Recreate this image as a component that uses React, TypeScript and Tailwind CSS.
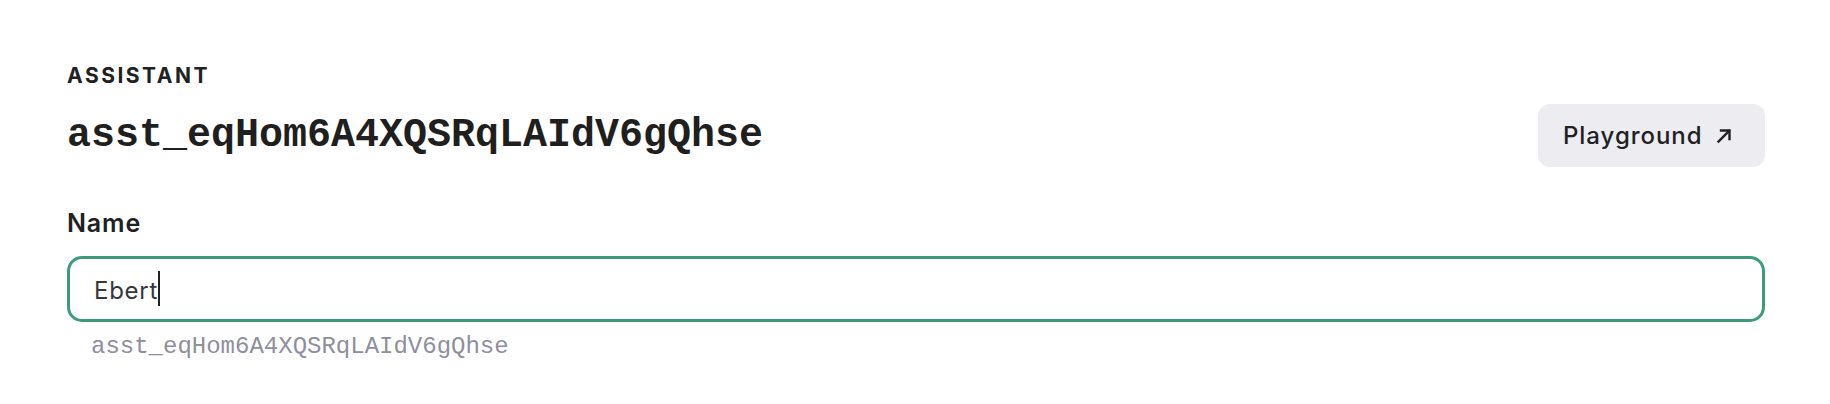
import React from "react";

export default function App() {
  return (
    <div className="w-[1830px] h-[404px] bg-white px-[67px] pt-[64px] text-[#202123] font-['Inter',sans-serif]">
      <div className="w-[1698px]">
        <div className="text-[21px] leading-[24px] font-bold tracking-[0.12em]">ASSISTANT</div>
        <div className="mt-[16px] flex items-center justify-between">
          <div className="font-['Liberation_Mono',monospace] font-bold text-[40px] leading-[48px] text-[#1f1f1f]">
            asst_eqHom6A4XQSRqLAIdV6gQhse
          </div>
          <button className="flex items-center h-[63px] w-[227px] rounded-[12px] bg-[#ececf1] pl-[25px] text-[24px] tracking-[0.04em] font-medium leading-[28px] text-[#202123]">
            <span>Playground</span>
            <svg className="ml-[12px]" width="18" height="18" viewBox="0 0 18 18" fill="none" stroke="#202123" strokeWidth="2.4" strokeLinecap="square">
              <path d="M3.5 14.5 L14 4" />
              <path d="M6 3.5 H14.5 V12" />
            </svg>
          </button>
        </div>
        <div className="mt-[42px] text-[25px] leading-[28px] font-semibold tracking-[0.035em]">Name</div>
        <div className="mt-[19px] h-[66px] rounded-[15px] border-[3px] border-[#3e9a7c] flex items-center pl-[24px] pt-[2px]">
          <span className="text-[24px] leading-[29px] tracking-[0.03em] text-[#353740]">Ebert</span>
          <span className="w-[2px] h-[35px] bg-[#202123] -mt-[4px]"></span>
        </div>
        <div className="mt-[11px] pl-[24px] font-['Liberation_Mono',monospace] text-[24px] leading-[28px] text-[#8e8ea0]">
          asst_eqHom6A4XQSRqLAIdV6gQhse
        </div>
      </div>
    </div>
  );
}
